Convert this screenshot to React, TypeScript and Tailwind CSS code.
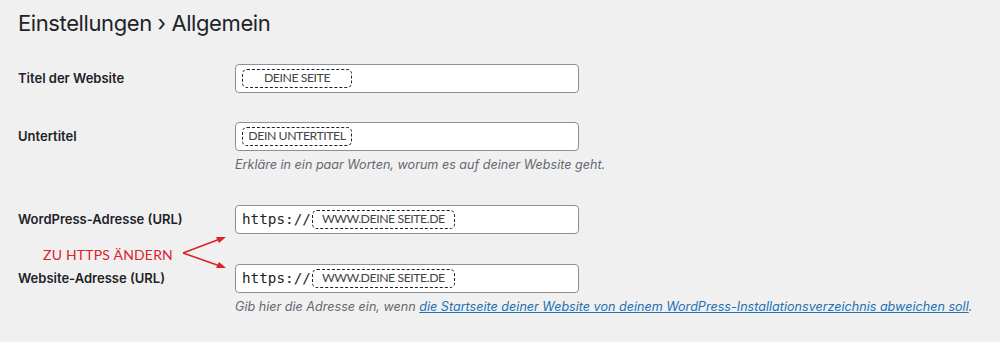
import React from 'react'

const FONT = { fontFamily: 'Inter, "Noto Sans", sans-serif' }

function Dashed({ children, className = '' }: { children: React.ReactNode; className?: string }) {
  return (
    <span
      className={`inline-flex items-center justify-center h-[19px] border border-dashed border-[#222] rounded-[5px] text-[12.3px] tracking-[-0.45px] text-[#444] ${className}`}
      style={{ fontFamily: 'Lato, "Open Sans", sans-serif' }}
    >
      {children}
    </span>
  )
}

function Field({ children }: { children: React.ReactNode }) {
  return (
    <div className="w-[344px] h-[29px] bg-white border border-[#8c8f94] rounded-[4px] flex items-center px-[6px]">
      {children}
    </div>
  )
}

function Row({ label, children, className = '' }: { label: string; children: React.ReactNode; className?: string }) {
  return (
    <div className={`flex items-center ${className}`}>
      <div className="w-[217px] shrink-0 text-[13px] font-semibold text-[#1d2327]">{label}</div>
      <Field>{children}</Field>
    </div>
  )
}

function Url() {
  return (
    <div className="flex items-center">
      <span className="text-[14.3px] text-[#1d2327]" style={{ fontFamily: '"DejaVu Sans Mono", monospace' }}>
        https://
      </span>
      <Dashed className="w-[143px] ml-[1px]">WWW.DEINE SEITE.DE</Dashed>
    </div>
  )
}

export default function App() {
  return (
    <div className="w-[1000px] h-[342px] bg-[#f0f0f1] relative overflow-hidden" style={FONT}>
      <div className="px-[18px] pt-[8px]">
        <h1 className="text-[22px] tracking-[-0.4px] text-[#1d2327] font-normal leading-[30px]">
          Einstellungen › Allgemein
        </h1>

        <Row label="Titel der Website" className="mt-[26px]">
          <Dashed className="w-[110px]">DEINE SEITE</Dashed>
        </Row>

        <Row label="Untertitel" className="mt-[29px]">
          <Dashed className="w-[110px]">DEIN UNTERTITEL</Dashed>
        </Row>
        <p className="ml-[217px] mt-[5px] text-[12.6px] italic text-[#646970]">
          Erkläre in ein paar Worten, worum es auf deiner Website geht.
        </p>

        <Row label="WordPress-Adresse (URL)" className="mt-[30px]">
          <Url />
        </Row>

        <Row label="Website-Adresse (URL)" className="mt-[30px]">
          <Url />
        </Row>
        <p className="ml-[217px] mt-[5px] text-[12.6px] italic text-[#646970] whitespace-nowrap">
          Gib hier die Adresse ein, wenn{' '}
          <span className="text-[#2271b1] underline">
            die Startseite deiner Website von deinem WordPress-Installationsverzeichnis abweichen soll
          </span>
          .
        </p>
      </div>

      {/* annotation */}
      <div
        className="absolute left-[43px] top-[244px] text-[14px] text-[#e0202a] tracking-[0.2px]"
        style={{ fontFamily: 'Lato, "Open Sans", sans-serif' }}
      >
        ZU HTTPS ÄNDERN
      </div>
      <svg className="absolute left-[180px] top-[230px]" width="50" height="45" viewBox="0 0 50 45">
        <path d="M3 23 L40 9 M3 23 L40 36" stroke="#e0202a" strokeWidth="1.6" fill="none" />
        <path d="M46 7 L36 7 L39 13 Z" fill="#e0202a" />
        <path d="M46 38 L39 32 L36 38 Z" fill="#e0202a" />
      </svg>
    </div>
  )
}
